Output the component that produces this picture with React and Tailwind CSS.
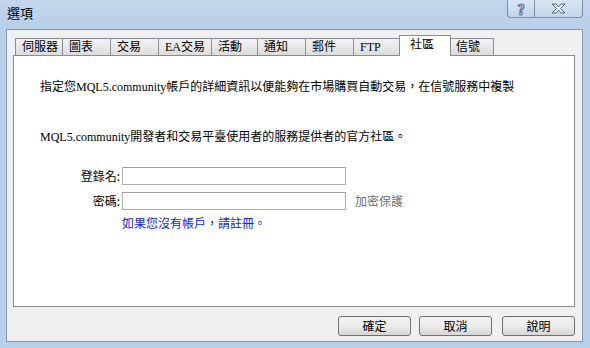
import React from 'react';

const tabs = [
  { label: '伺服器', w: 'w-[47px]' },
  { label: '圖表', w: 'w-[48px]' },
  { label: '交易', w: 'w-[48px]' },
  { label: 'EA交易', w: 'w-[53px]' },
  { label: '活動', w: 'w-[46px]' },
  { label: '通知', w: 'w-[48px]' },
  { label: '郵件', w: 'w-[48px]' },
  { label: 'FTP', w: 'w-[48px]' },
  { label: '社區', w: 'w-[52px]', active: true },
  { label: '信號', w: 'w-[45px]' },
];

const serif = "font-['Liberation_Serif','Noto_Sans_CJK_TC',serif]";
const sans = "font-['Noto_Sans_CJK_TC','Liberation_Sans',sans-serif]";

const Tab = ({ label, w, active }) =>
  active ? (
    <div
      className={`${w} -mx-[2px] -mb-px h-[21px] relative z-10 bg-white border border-b-0 border-[#898c95] pl-[10px] pt-[2px] text-[12px] leading-[14px] text-black ${serif}`}
    >
      {label}
    </div>
  ) : (
    <div
      className={`${w} h-[17px] border border-b-0 border-r-0 last:border-r border-[#898c95] bg-gradient-to-b from-[#f3f3f3] to-[#dcdcdc] pl-[6px] pt-[1px] text-[12px] leading-[14px] text-black ${serif}`}
    >
      {label}
    </div>
  );

const Button = ({ children }) => (
  <button
    className={`block w-[73px] h-[20px] rounded-[3px] border border-[#707070] bg-gradient-to-b from-[#f2f2f2] via-[#ebebeb] to-[#d6d6d6] text-[12px] leading-[14px] text-black ${sans}`}
  >
    {children}
  </button>
);

export default function App() {
  return (
    <div className="w-[590px] h-[348px] flex flex-col bg-[#b9d1ea] overflow-hidden">
      {/* Title bar */}
      <div className="h-[29px] flex items-start justify-between bg-gradient-to-b from-[#c2d6ec] to-[#b8cfe8]">
        <div className={`pl-[7px] pt-[5px] text-[13px] leading-[16px] text-black ${sans}`}>選項</div>
        <div className="flex mr-[7px]">
          <div className="w-[28px] h-[18px] border border-t-0 border-[#7d8ea6] rounded-bl-[4px] bg-gradient-to-b from-[#d9e5f2] to-[#c3d5ea] flex items-center justify-center">
            <span
              className={`text-[14px] leading-[14px] font-bold text-[#eef3f9] [-webkit-text-stroke:1px_#56677e] ${sans}`}
            >
              ?
            </span>
          </div>
          <div className="w-[48px] h-[18px] border border-t-0 border-l-0 border-[#7d8ea6] rounded-br-[4px] bg-gradient-to-b from-[#d9e5f2] to-[#c3d5ea] flex items-center justify-center">
            <svg width="15" height="11" viewBox="0 0 15 11">
              <path
                d="M1 1h4l2.5 3L10 1h4l-4.5 4.5L14 10h-4L7.5 7 5 10H1l4.5-4.5z"
                fill="#eef3f9"
                stroke="#56677e"
                strokeWidth="1"
                strokeLinejoin="round"
              />
            </svg>
          </div>
        </div>
      </div>

      {/* Client area */}
      <div className="ml-[6px] mr-[7px] h-[313px] border border-[#8597b0] bg-[#f0f0f0] flex flex-col">
        <div className="ml-[6px] mr-[7px] mt-[5px]">
          <div className="flex items-end h-[20px] pl-[2px]">
            {tabs.map(t => (
              <Tab key={t.label} {...t} />
            ))}
          </div>
          <div className="h-[252px] border border-[#898c95] bg-white pl-[26px]">
            <p className={`mt-[24px] text-[12px] leading-[14px] text-black ${serif}`}>
              指定您MQL5.community帳戶的詳細資訊以便能夠在市場購買自動交易，在信號服務中複製
            </p>
            <p className={`mt-[36px] text-[12px] leading-[14px] text-black ${serif}`}>
              MQL5.community開發者和交易平臺使用者的服務提供者的官方社區。
            </p>

            <div className={`mt-[23px] flex flex-col gap-[7px] text-[12px] leading-[14px] ${sans}`}>
              <div className="flex items-center">
                <label className="w-[82px] text-right pr-[2px] text-black">登錄名:</label>
                <input className="w-[224px] h-[18px] border border-[#abadb3] border-t-[#a0a0a0] bg-white outline-none" />
              </div>
              <div className="flex items-center">
                <label className="w-[82px] text-right pr-[2px] text-black">密碼:</label>
                <input
                  type="password"
                  className="w-[224px] h-[18px] border border-[#abadb3] border-t-[#a0a0a0] bg-white outline-none"
                />
                <span className="ml-[9px] text-[#6d6d6d]">加密保護</span>
              </div>
              <div className="pl-[82px] -mt-[1px] text-[#0b24fb]">如果您沒有帳戶，請註冊。</div>
            </div>
          </div>
        </div>

        <div className="flex justify-end gap-[8px] pr-[7px] mt-[9px]">
          <Button>確定</Button>
          <Button>取消</Button>
          <div className="ml-[2px] flex">
            <Button>說明</Button>
          </div>
        </div>
      </div>
    </div>
  );
}
